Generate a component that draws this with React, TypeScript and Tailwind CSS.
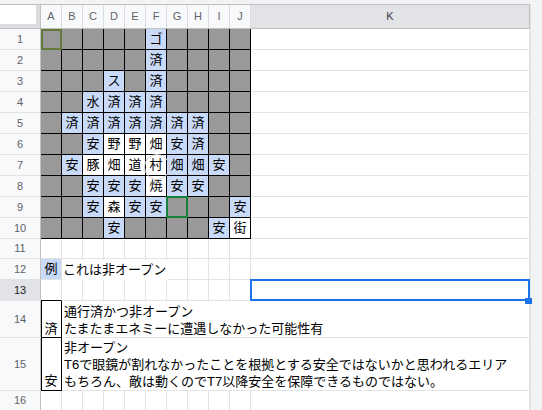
import React from 'react';

const COLS = ['A', 'B', 'C', 'D', 'E', 'F', 'G', 'H', 'I', 'J'];

// '' = grey block, 'b:x' = blue cell, 'w:x' = white cell
const MAP: string[][] = [
  ['', '', '', '', '', 'b:ゴ', '', '', '', ''],
  ['', '', '', '', '', 'b:済', '', '', '', ''],
  ['', '', '', 'b:ス', '', 'b:済', '', '', '', ''],
  ['', '', 'b:水', 'b:済', 'b:済', 'b:済', '', '', '', ''],
  ['', 'b:済', 'b:済', 'b:済', 'b:済', 'b:済', 'b:済', 'b:済', '', ''],
  ['', '', 'b:安', 'w:野', 'w:野', 'w:畑', 'b:安', 'b:済', '', ''],
  ['', 'b:安', 'w:豚', 'w:畑', 'w:道', 'w:村', 'b:畑', 'b:畑', 'b:安', ''],
  ['', '', 'b:安', 'b:安', 'b:安', 'w:焼', 'b:安', 'b:安', '', ''],
  ['', '', 'b:安', 'w:森', 'b:安', 'b:安', '', '', '', 'b:安'],
  ['', '', '', 'b:安', '', '', '', '', 'b:安', 'w:街'],
];

function RowHead({ n, className = '', active = false }: { n: number; className?: string; active?: boolean }) {
  return (
    <div
      className={`w-[41px] shrink-0 flex items-center justify-center border-r border-b border-r-[#c0c0c0] border-b-[#e2e3e3] text-[11px] ${
        active ? 'bg-[#e1e3e6] text-[#202124]' : 'bg-[#f8f9fa] text-[#5f6368]'
      } ${className}`}
    >
      {n}
    </div>
  );
}

function Grid({ last = false }: { last?: boolean }) {
  return (
    <>
      {COLS.map((c) => (
        <div key={c} className={`w-[21px] shrink-0 border-r border-[#e2e3e3] ${last ? '' : 'border-b'}`} />
      ))}
      <div className={`w-[279px] shrink-0 border-r border-[#e2e3e3] ${last ? '' : 'border-b'}`} />
    </>
  );
}

function BlockCell({ v, r, c }: { v: string; r: number; c: number }) {
  const kind = v ? v[0] : 'g';
  const text = v ? v.slice(2) : '';
  const bg = kind === 'b' ? 'bg-[#c9daf8]' : kind === 'w' ? 'bg-white' : 'bg-[#999999]';
  return (
    <div className={`relative w-[21px] shrink-0 border-r border-b border-black flex items-center justify-center ${bg}`}>
      {text}
      {r === 0 && c === 0 && (
        <div className="absolute left-0 top-0 w-[21px] h-[21px] border-2 border-[#65793a]" />
      )}
      {r === 8 && c === 6 && (
        <div className="absolute -left-[1px] -top-[1px] w-[22px] h-[22px] border-2 border-[#188038]" />
      )}
      {r === 6 && c === 5 && (
        <svg className="absolute z-10 -left-[3px] -top-[2px] overflow-visible pointer-events-none" width="28" height="28" viewBox="0 0 28 28">
          <circle cx="14" cy="14" r="12.5" fill="none" stroke="#d2d2d2" strokeWidth="1" />
        </svg>
      )}
    </div>
  );
}

export default function App() {
  return (
    <div className="w-[542px] h-[410px] overflow-hidden bg-white text-[13px] text-black font-['Liberation_Sans','Noto_Sans_CJK_JP',sans-serif]">
      <div className="h-[4px] bg-[#f1f3f4]" />
      <div className="flex">
        <div className="w-[530px] shrink-0">
          {/* column header */}
          <div className="flex h-[25px] border-t border-b border-[#c0c0c0]">
            <div className="w-[41px] shrink-0 border-r border-[#c0c0c0] bg-[#dadce0]">
              <div className="w-[36px] h-[19px] bg-white" />
            </div>
            {COLS.map((c) => (
              <div
                key={c}
                className="w-[21px] shrink-0 border-r border-[#dadce0] bg-[#f8f9fa] flex items-center justify-center text-[11px] text-[#5f6368]"
              >
                {c}
              </div>
            ))}
            <div className="w-[279px] shrink-0 border-r border-[#c0c0c0] bg-[#e1e3e6] flex items-center justify-center text-[11px] text-[#3c4043]">
              K
            </div>
          </div>

          {/* map rows 1-10 */}
          {MAP.map((row, r) => (
            <div key={r} className="flex h-[21px]">
              <RowHead n={r + 1} />
              {row.map((v, c) => (
                <BlockCell key={c} v={v} r={r} c={c} />
              ))}
              <div className="w-[279px] shrink-0 border-r border-b border-[#e2e3e3]" />
            </div>
          ))}

          {/* row 11 */}
          <div className="flex h-[20px]">
            <RowHead n={11} />
            <Grid />
          </div>

          {/* row 12 */}
          <div className="flex h-[21px]">
            <RowHead n={12} />
            <div className="w-[21px] shrink-0 border-r border-b border-[#e2e3e3] bg-[#c9daf8] flex items-center justify-center">
              例
            </div>
            <div className="relative w-[21px] shrink-0 border-r border-b border-[#e2e3e3]">
              <span className="absolute left-[1px] top-[1px] whitespace-nowrap bg-white pr-[2px]">これは非オープン</span>
            </div>
            {COLS.slice(2).map((c) => (
              <div key={c} className="w-[21px] shrink-0 border-r border-b border-[#e2e3e3]" />
            ))}
            <div className="w-[279px] shrink-0 border-r border-b border-[#e2e3e3]" />
          </div>

          {/* row 13 */}
          <div className="flex h-[21px]">
            <RowHead n={13} active />
            <div className="w-[21px] shrink-0 border-r border-b border-r-[#e2e3e3] border-b-black" />
            {COLS.slice(1).map((c) => (
              <div key={c} className="w-[21px] shrink-0 border-r border-b border-[#e2e3e3]" />
            ))}
            <div className="relative w-[279px] shrink-0 border-r border-b border-[#e2e3e3]">
              <div className="absolute -left-[1px] -top-[1px] w-[280px] h-[22px] border-2 border-[#1a73e8]" />
              <div className="absolute left-[274px] top-[18px] w-[7px] h-[6px] bg-[#1a73e8]" />
            </div>
          </div>

          {/* row 14 */}
          <div className="flex h-[37px]">
            <RowHead n={14} />
            <div className="w-[21px] shrink-0 border-r border-b border-black shadow-[inset_1px_0_0_#000] flex items-end justify-center leading-[17px]">
              済
            </div>
            <div className="w-[468px] shrink-0 border-r border-b border-[#e2e3e3] flex flex-col justify-end pl-[2px] leading-[17px] whitespace-nowrap">
              <div>通行済かつ非オープン</div>
              <div>たまたまエネミーに遭遇しなかった可能性有</div>
            </div>
          </div>

          {/* row 15 */}
          <div className="flex h-[53px]">
            <RowHead n={15} />
            <div className="w-[21px] shrink-0 border-r border-b border-black shadow-[inset_1px_0_0_#000] flex items-end justify-center leading-[17px] pb-[1px]">
              安
            </div>
            <div className="w-[468px] shrink-0 border-r border-b border-[#e2e3e3] flex flex-col justify-end pl-[2px] leading-[17px] whitespace-nowrap">
              <div>非オープン</div>
              <div>T6で眼鏡が割れなかったことを根拠とする安全ではないかと思われるエリア</div>
              <div>もちろん、敵は動くのでT7以降安全を保障できるものではない。</div>
            </div>
          </div>

          {/* row 16 */}
          <div className="flex h-[19px]">
            <RowHead n={16} className="border-b-0" />
            <Grid last />
          </div>
        </div>
        <div className="flex-1 bg-[#f1f3f4] border-l border-[#e2e3e3]" />
      </div>
    </div>
  );
}
